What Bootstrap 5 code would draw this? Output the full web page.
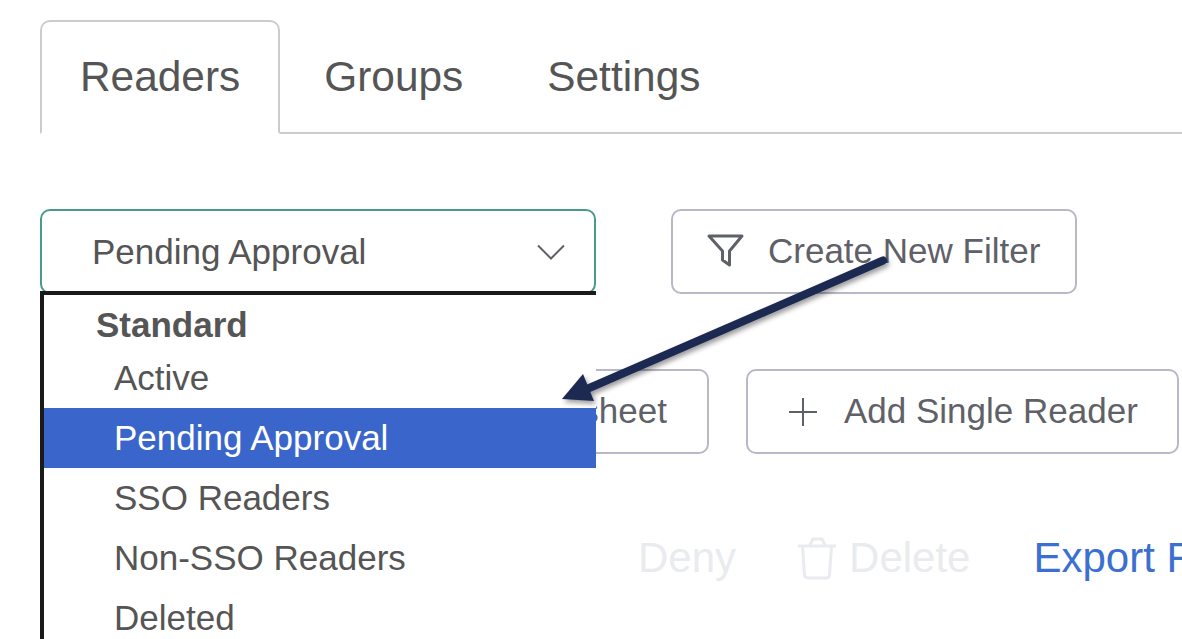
<!DOCTYPE html>
<html lang="en">
<head>
    <meta charset="UTF-8" />
    <meta name="viewport" content="width=device-width, initial-scale=1" />
    <title>Readers</title>
    <link href="https://cdn.jsdelivr.net/npm/bootstrap@5.3.0/dist/css/bootstrap.min.css" rel="stylesheet" />
    <style>
        html, body {
            height: 639px;
            overflow: hidden;
        }

        body {
            position: relative;
            background: #fff;
            color: #555;
            font-family: "Liberation Sans", Arial, sans-serif;
            font-size: 35px;
            line-height: 1.2;
            padding: 20px 0 0 40px;
        }

        .tab-strip {
            border-bottom: 2px solid #ccc;
            --bs-nav-tabs-border-width: 2px;
            --bs-nav-tabs-border-color: #ccc;
        }

        .tab-strip .nav-link {
            color: #555;
            font-size: 42.4px;
            line-height: 50px;
            padding: 30px 38px 30px;
            margin-right: 4px;
            margin-bottom: -2px;
            border: 2px solid transparent;
            border-radius: 10px 10px 0 0;
        }

        .tab-strip .nav-link.active {
            color: #555;
            border-color: #ccc #ccc #fff;
        }

        .filter-row {
            margin-top: 75px;
            gap: 75px;
        }

        .filter-select {
            width: 556px;
            height: 85px;
            border: 2px solid #4a9a8a;
            border-radius: 10px;
            padding: 0 29px 0 50px;
        }

        .tool-btn {
            height: 85px;
            color: #5f6168;
            font-size: 35px;
            background: #fff;
            border: 2px solid #b9b8c6;
            border-radius: 10px;
        }

        .tool-btn:hover {
            color: #5f6168;
            border-color: #b9b8c6;
        }

        .btn-filter {
            width: 406px;
            gap: 24px;
            padding: 0 0 0 34px;
        }

        .upload-row {
            margin-top: 75px;
            gap: 37px;
        }

        .btn-upload {
            width: 669px;
            padding: 0 40px 0 0;
        }

        .btn-add {
            width: 433px;
            gap: 26px;
            padding: 0 0 0 40px;
        }

        .action-row {
            margin-top: 80px;
            padding-left: 598px;
            white-space: nowrap;
            font-size: 42px;
            line-height: 48px;
        }

        .act-off {
            color: #e9ebef;
        }

        .act-deny {
            margin-right: 62px;
        }

        .act-delete {
            margin-right: 63px;
            gap: 13px;
        }

        .act-link {
            color: #3b6fd0;
            text-decoration: none;
        }

        .pick-menu {
            position: absolute;
            top: 291px;
            left: 40px;
            width: 556px;
            height: 360px;
            display: block;
            padding: 0;
            color: #555;
            font-size: 35px;
            background: #fff;
            border: 0;
            border-top: 4px solid #1a1a1a;
            border-left: 4px solid #1a1a1a;
            border-radius: 0;
        }

        .pick-menu .dropdown-header {
            height: 53px;
            padding: 10px 0 0 52px;
            color: #555;
            font-size: 35px;
            font-weight: 700;
            line-height: 40px;
        }

        .pick-menu .dropdown-item {
            height: 60px;
            padding: 0 0 0 70px;
            color: #555;
            line-height: 60px;
        }

        .pick-menu .dropdown-item.active {
            color: #fff;
            background: #3a66cc;
        }

        .note-arrow {
            position: absolute;
            top: 240px;
            left: 540px;
            z-index: 1001;
            overflow: visible;
            pointer-events: none;
        }
    </style>
</head>
<body>
    <ul class="nav nav-tabs tab-strip">
        <li class="nav-item"><a class="nav-link active" href="#">Readers</a></li>
        <li class="nav-item"><a class="nav-link" href="#">Groups</a></li>
        <li class="nav-item"><a class="nav-link" href="#">Settings</a></li>
    </ul>

    <div class="d-flex filter-row">
        <div class="filter-select d-flex align-items-center justify-content-between">
            <span>Pending Approval</span>
            <svg width="28" height="16" viewBox="0 0 28 16" fill="none" stroke="#5f6168" stroke-width="2"><path d="M1 1.500 14 14.500 27 1.500" /></svg>
        </div>
        <button type="button" class="btn tool-btn btn-filter d-flex align-items-center">
            <svg width="37" height="36" viewBox="0 0 37 36" fill="none" stroke="#5f6168" stroke-width="3" stroke-linejoin="round"><path d="M2 2H35L22.500 17V31L15.500 26V17Z" /></svg>
            <span>Create New Filter</span>
        </button>
    </div>

    <div class="d-flex upload-row">
        <button type="button" class="btn tool-btn btn-upload d-flex align-items-center justify-content-end">Upload Spreadsheet</button>
        <button type="button" class="btn tool-btn btn-add d-flex align-items-center">
            <svg width="30" height="30" viewBox="0 0 30 30" fill="none" stroke="#5f6168" stroke-width="2"><path d="M15 1V29M1 15H29" /></svg>
            <span>Add Single Reader</span>
        </button>
    </div>

    <div class="d-flex align-items-center action-row">
        <span class="act-off act-deny">Deny</span>
        <span class="act-off act-delete d-flex align-items-center">
            <svg width="38" height="44" viewBox="0 0 38 44" fill="none" stroke="#e9ebef" stroke-width="3" stroke-linejoin="round"><path d="M0 10H38M12 9 15 3H24L27 9M4.500 10 6.500 39Q6.700 42 10 42H28Q31.300 42 31.500 39L33.500 10" /></svg>
            <span>Delete</span>
        </span>
        <a class="act-link" href="#">Export F</a>
    </div>

    <div class="dropdown-menu pick-menu">
        <div class="dropdown-header">Standard</div>
        <a class="dropdown-item" href="#">Active</a>
        <a class="dropdown-item active" href="#">Pending Approval</a>
        <a class="dropdown-item" href="#">SSO Readers</a>
        <a class="dropdown-item" href="#">Non-SSO Readers</a>
        <a class="dropdown-item" href="#">Deleted</a>
    </div>

    <svg class="note-arrow" width="360" height="180" viewBox="0 0 360 180">
        <defs>
            <filter id="arrowShadow" x="-10%" y="-20%" width="120%" height="140%">
                <feDropShadow dx="2" dy="3" stdDeviation="2.500" flood-color="#000" flood-opacity="0.4" />
            </filter>
        </defs>
        <g filter="url(#arrowShadow)" fill="#1c2951">
            <path d="M343 20.500 40 152" stroke="#1c2951" stroke-width="8" stroke-linecap="round" />
            <path d="M22 159 43 134 54 161Z" />
        </g>
    </svg>

    <script src="https://cdn.jsdelivr.net/npm/bootstrap@5.3.0/dist/js/bootstrap.bundle.min.js"></script>
</body>
</html>
